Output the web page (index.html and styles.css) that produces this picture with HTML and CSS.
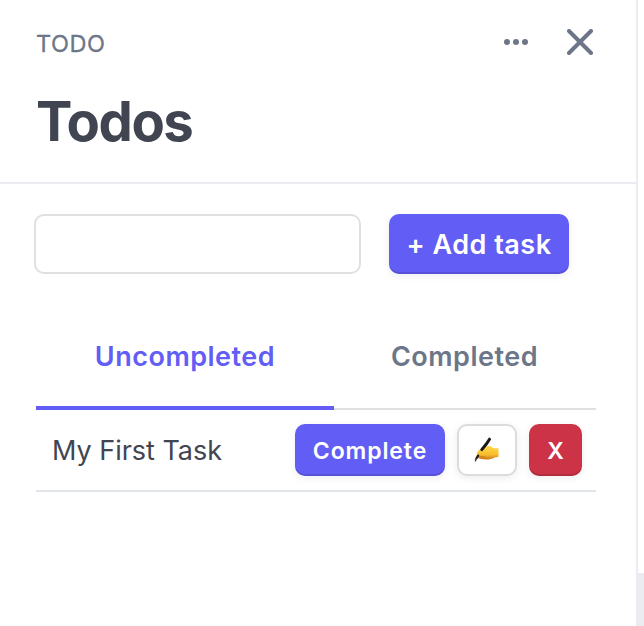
FILE: index.html
```
<!DOCTYPE html>
<html lang="en">
<head>
<meta charset="utf-8">
<title>Todos</title>
<link rel="stylesheet" href="styles.css">
</head>
<body>
<main class="panel">
  <header class="header">
    <div class="topbar">
      <span class="app-name">TODO</span>
      <svg class="icon-more" width="24" height="6" viewBox="0 0 24 6" fill="currentColor"><circle cx="3" cy="3" r="3"/><circle cx="12" cy="3" r="3"/><circle cx="21" cy="3" r="3"/></svg>
      <svg class="icon-close" width="26" height="26" viewBox="0 0 26 26" fill="none" stroke="currentColor" stroke-width="4" stroke-linecap="round"><path d="M2 2l22 22M24 2L2 24"/></svg>
    </div>
    <h1 class="title">Todos</h1>
  </header>
  <form class="add-form">
    <input class="task-input" type="text" aria-label="Task">
    <button class="button button-add" type="button">+ Add task</button>
  </form>
  <nav class="tabs">
    <a class="tab tab-active">Uncompleted</a>
    <a class="tab">Completed</a>
  </nav>
  <div class="task">
    <span class="task-name">My First Task</span>
    <button class="button button-complete" type="button">Complete</button>
    <button class="button button-edit" type="button" aria-label="Edit">
      <svg width="26" height="26" viewBox="0 0 26 26">
        <defs><linearGradient id="skin" x1="0" y1="0" x2="0" y2="1"><stop offset="0" stop-color="#ffd84a"/><stop offset=".65" stop-color="#f7bd2c"/><stop offset="1" stop-color="#c9781b"/></linearGradient></defs>
        <path d="M3 20C1.800 16.500 4.500 12.500 8.500 11L11 10c3-1.700 5-1.300 7 .2 1.700 1.200 4 .9 6.500 1.100v8.500l-4 .6c-2 1.400-5 2-8.500 2-4 0-7-.3-9-2.400z" fill="url(#skin)"/>
        <path d="M4 20.500c2-1.300 4-.8 7-.3" fill="none" stroke="#b9701c" stroke-width=".8" stroke-linecap="round"/>
        <path d="M15.500 2.200L12.500 6.800L7.800 12.600" fill="none" stroke="#17191c" stroke-width="3" stroke-linecap="round"/>
        <path d="M4.200 18.700L2.300 21.500" stroke="#17191c" stroke-width="2.200" stroke-linecap="round"/>
        <path d="M2.500 21.500L1.300 24" stroke="#33363b" stroke-width="1.200" stroke-linecap="round"/>
      </svg>
    </button>
    <button class="button button-delete" type="button">X</button>
  </div>
</main>
<aside class="page-edge"></aside>
</body>
</html>
```
FILE: styles.css
```
* { box-sizing: border-box; }
body {
  margin: 0;
  display: flex;
  height: 626px;
  overflow: hidden;
  background: #fff;
  color: #414552;
  font-family: Inter, "Liberation Sans", sans-serif;
}
.panel { width: 638px; border-right: 2px solid #ebebf1; }
.page-edge { width: 6px; height: 53px; align-self: flex-end; background: #ebecf1; }
.header { height: 184px; padding: 24px 42px 0 36px; border-bottom: 2px solid #ebebf1; }
.topbar { display: flex; align-items: center; height: 36px; color: #6c7688; }
.app-name { font-size: 23.500px; line-height: 36px; margin: 4px auto 0 0; letter-spacing: .5px; -webkit-text-stroke: .3px currentColor; }
.icon-more { margin-right: 39px; }
.icon-close { margin-right: 1px; }
.title { margin: 25px 0 0; font-size: 54.500px; line-height: 72px; font-weight: 700; letter-spacing: -1.5px; }
.add-form { display: flex; gap: 28px; padding: 30px 0 0 34px; }
.task-input { width: 327px; height: 60px; border: 2px solid #e0e0e0; border-radius: 10px; background: #fff; padding: 0 14px; font: 28px Inter, sans-serif; }
.button {
  border: 0;
  border-radius: 10px;
  padding: 0;
  background: #625df5;
  color: #fff;
  font-family: inherit;
  font-weight: 600;
  white-space: nowrap;
  box-shadow: inset 0 -2px 0 rgba(0, 0, 0, .12), 0 2px 8px rgba(0, 0, 0, .07);
}
.button-add { width: 180px; height: 60px; padding-top: 1px; font-size: 27px; letter-spacing: .5px; }
.tabs { display: flex; margin: 32px 40px 0 36px; height: 104px; box-shadow: inset 0 -2px #e0e0e0; }
.tab { width: 261px; padding-top: 34px; text-align: center; font-size: 27px; line-height: 33px; font-weight: 600; letter-spacing: .5px; color: #6c7688; }
.tab-active { width: 298px; color: #625df5; border-bottom: 4px solid #625df5; }
.task { display: flex; align-items: center; height: 82px; margin: 0 40px 0 36px; padding: 0 14px 0 16px; border-bottom: 2px solid #e1e4e9; }
.task-name { margin-right: auto; padding-top: 1px; font-size: 27px; line-height: 34px; letter-spacing: -.02px; }
.button-complete { width: 150px; height: 52px; padding-top: 1px; font-size: 23px; letter-spacing: .9px; }
.button-edit { width: 60px; height: 52px; margin: 0 12px; display: grid; place-items: center; background: #fff; border: 2px solid #dcdcde; box-shadow: 0 2px 8px rgba(0, 0, 0, .08); }
.button-delete { width: 53px; height: 52px; padding-top: 1px; background: #cc3347; font-size: 23px; }
```
